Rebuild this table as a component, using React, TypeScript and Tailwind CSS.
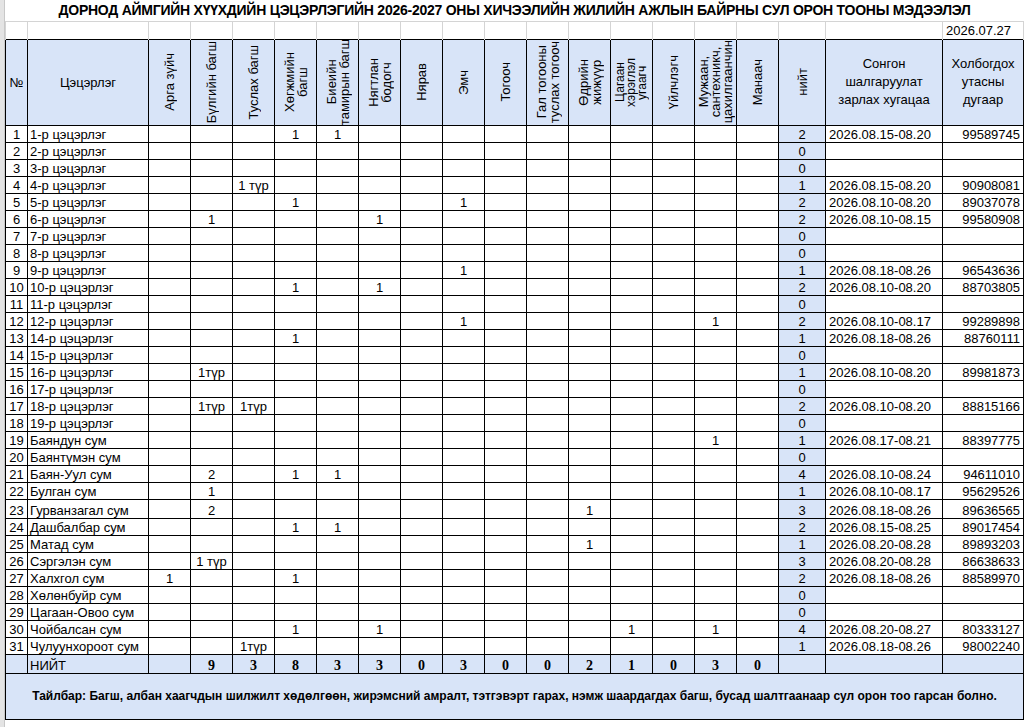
import React from 'react'

type Row = {
  name: string
  cells: Record<number, string>
  total: string
  date?: string
  phone?: string
  tall?: boolean
}

const positions: string[][] = [
  ['Арга зүйч'],
  ['Бүлгийн багш'],
  ['Туслах багш'],
  ['Хөгжмийн', 'багш'],
  ['Биеийн', 'тамирын багш'],
  ['Нягтлан', 'бодогч'],
  ['Нярав'],
  ['Эмч'],
  ['Тогооч'],
  ['Гал тогооны', 'туслах тогооч'],
  ['Өдрийн', 'жижүүр'],
  ['Цагаан', 'хэрэглэл', 'угаагч'],
  ['Үйлчлэгч'],
  ['Мужаан,', 'сантехникч,', 'цахилгаанчин'],
  ['Манаач'],
]

const rows: Row[] = [
  { name: '1-р цэцэрлэг', cells: { 3: '1', 4: '1' }, total: '2', date: '2026.08.15-08.20', phone: '99589745' },
  { name: '2-р цэцэрлэг', cells: {}, total: '0' },
  { name: '3-р цэцэрлэг', cells: {}, total: '0' },
  { name: '4-р цэцэрлэг', cells: { 2: '1 түр' }, total: '1', date: '2026.08.15-08.20', phone: '90908081' },
  { name: '5-р цэцэрлэг', cells: { 3: '1', 7: '1' }, total: '2', date: '2026.08.10-08.20', phone: '89037078' },
  { name: '6-р цэцэрлэг', cells: { 1: '1', 5: '1' }, total: '2', date: '2026.08.10-08.15', phone: '99580908' },
  { name: '7-р цэцэрлэг', cells: {}, total: '0' },
  { name: '8-р цэцэрлэг', cells: {}, total: '0' },
  { name: '9-р цэцэрлэг', cells: { 7: '1' }, total: '1', date: '2026.08.18-08.26', phone: '96543636' },
  { name: '10-р цэцэрлэг', cells: { 3: '1', 5: '1' }, total: '2', date: '2026.08.10-08.20', phone: '88703805' },
  { name: '11-р цэцэрлэг', cells: {}, total: '0' },
  { name: '12-р цэцэрлэг', cells: { 7: '1', 13: '1' }, total: '2', date: '2026.08.10-08.17', phone: '99289898' },
  { name: '14-р цэцэрлэг', cells: { 3: '1' }, total: '1', date: '2026.08.18-08.26', phone: '88760111' },
  { name: '15-р цэцэрлэг', cells: {}, total: '0' },
  { name: '16-р цэцэрлэг', cells: { 1: '1түр' }, total: '1', date: '2026.08.10-08.20', phone: '89981873' },
  { name: '17-р цэцэрлэг', cells: {}, total: '0' },
  { name: '18-р цэцэрлэг', cells: { 1: '1түр', 2: '1түр' }, total: '2', date: '2026.08.10-08.20', phone: '88815166' },
  { name: '19-р цэцэрлэг', cells: {}, total: '0' },
  { name: 'Баяндун сум', cells: { 13: '1' }, total: '1', date: '2026.08.17-08.21', phone: '88397775' },
  { name: 'Баянтүмэн сум', cells: {}, total: '0' },
  { name: 'Баян-Уул сум', cells: { 1: '2', 3: '1', 4: '1' }, total: '4', date: '2026.08.10-08.24', phone: '94611010' },
  { name: 'Булган сум', cells: { 1: '1' }, total: '1', date: '2026.08.10-08.17', phone: '95629526' },
  { name: 'Гурванзагал сум', cells: { 1: '2', 10: '1' }, total: '3', date: '2026.08.18-08.26', phone: '89636565', tall: true },
  { name: 'Дашбалбар сум', cells: { 3: '1', 4: '1' }, total: '2', date: '2026.08.15-08.25', phone: '89017454' },
  { name: 'Матад сум', cells: { 10: '1' }, total: '1', date: '2026.08.20-08.28', phone: '89893203' },
  { name: 'Сэргэлэн сум', cells: { 1: '1 түр' }, total: '3', date: '2026.08.20-08.28', phone: '86638633' },
  { name: 'Халхгол сум', cells: { 0: '1', 3: '1' }, total: '2', date: '2026.08.18-08.26', phone: '88589970' },
  { name: 'Хөлөнбуйр сум', cells: {}, total: '0' },
  { name: 'Цагаан-Овоо сум', cells: {}, total: '0' },
  { name: 'Чойбалсан сум', cells: { 3: '1', 5: '1', 11: '1', 13: '1' }, total: '4', date: '2026.08.20-08.27', phone: '80333127' },
  { name: 'Чулуунхороот сум', cells: { 2: '1түр' }, total: '1', date: '2026.08.18-08.26', phone: '98002240' },
]

const totals = ['', '9', '3', '8', '3', '3', '0', '3', '0', '0', '2', '1', '0', '3', '0']

const td = 'border border-black p-0 align-bottom leading-[15px] whitespace-nowrap overflow-hidden'
const blue = 'bg-[#d8e4f8]'

function VerticalLabel({ lines, index }: { lines: string[]; index: number }) {
  const tight = index === 11 ? 'text-[12px] leading-[11px]' : index === 13 ? 'leading-[12px]' : 'leading-[13px]'
  return (
    <div className="flex h-[85px] items-center justify-center overflow-hidden">
      <span className={`[writing-mode:vertical-rl] rotate-180 text-center whitespace-nowrap ${tight}`}>
        {lines.map((l, i) => (
          <React.Fragment key={i}>
            {i > 0 && <br />}
            {l}
          </React.Fragment>
        ))}
      </span>
    </div>
  )
}

export default function App() {
  return (
    <div className="flex w-[1025px] h-[727px] overflow-hidden bg-white text-[13px] text-black font-['Liberation_Sans',Arial,sans-serif]">
      <div className="w-[5px] shrink-0 bg-[#e4e4e4] border-r border-[#c8c8c8]" />
      <div className="flex-1">
        <table className="table-fixed border-collapse w-[1018px]">
          <colgroup>
            <col className="w-[22px]" />
            <col className="w-[121px]" />
            {positions.map((_, i) => (
              <col key={i} className="w-[42px]" />
            ))}
            <col className="w-[47px]" />
            <col className="w-[117px]" />
            <col className="w-[81px]" />
          </colgroup>
          <tbody>
            <tr className="h-[21px]">
              <td colSpan={20} className="p-0 border-b border-[#d4d4d4] text-center font-bold text-[14px] tracking-[-0.25px] leading-[20px] whitespace-nowrap">
                ДОРНОД АЙМГИЙН ХҮҮХДИЙН ЦЭЦЭРЛЭГИЙН 2026-2027 ОНЫ ХИЧЭЭЛИЙН ЖИЛИЙН АЖЛЫН БАЙРНЫ СУЛ ОРОН ТООНЫ МЭДЭЭЛЭЛ
              </td>
            </tr>
            <tr className="h-[18px]">
              {Array.from({ length: 19 }).map((_, i) => (
                <td key={i} className="p-0 border-x border-t border-[#d4d4d4] border-b-black" />
              ))}
              <td className="p-0 pl-[3px] border-x border-t border-[#d4d4d4] border-b-black leading-[16px] align-bottom">2026.07.27</td>
            </tr>
            <tr className="h-[86px]">
              <td className={`${td} ${blue} text-center align-middle`}>№</td>
              <td className={`${td} ${blue} text-center align-middle`}>Цэцэрлэг</td>
              {positions.map((p, i) => (
                <td key={i} className={`${td} ${blue} align-middle`}>
                  <VerticalLabel lines={p} index={i} />
                </td>
              ))}
              <td className={`${td} ${blue} align-middle`}>
                <VerticalLabel lines={['нийт']} index={-1} />
              </td>
              <td className={`${td} ${blue} text-center align-middle leading-[18px] whitespace-normal`}>
                Сонгон
                <br />
                шалгаруулат
                <br />
                зарлах хугацаа
              </td>
              <td className={`${td} ${blue} text-center align-middle leading-[18px] whitespace-normal`}>
                Холбогдох
                <br />
                утасны
                <br />
                дугаар
              </td>
            </tr>
            {rows.map((r, ri) => (
              <tr key={ri} className={r.tall ? 'h-[19px]' : 'h-[17px]'}>
                <td className={`${td} text-center`}>{ri + 1}</td>
                <td className={`${td} pl-[2px]`}>{r.name}</td>
                {positions.map((_, ci) => (
                  <td key={ci} className={`${td} text-center`}>
                    {r.cells[ci] ?? ''}
                  </td>
                ))}
                <td className={`${td} ${blue} text-center`}>{r.total}</td>
                <td className={`${td} pl-[3px]`}>{r.date ?? ''}</td>
                <td className={`${td} text-right pr-[3px]`}>{r.phone ?? ''}</td>
              </tr>
            ))}
            <tr className="h-[19px]">
              <td className={`${td} ${blue}`} />
              <td className={`${td} ${blue} pl-[2px]`}>НИЙТ</td>
              {totals.map((t, i) => (
                <td key={i} className={`${td} ${blue} text-center font-bold font-['Liberation_Serif','Times_New_Roman',serif] text-[14px]`}>
                  {t}
                </td>
              ))}
              <td className={`${td} ${blue}`} />
              <td className={`${td} ${blue}`} />
              <td className={`${td} ${blue}`} />
            </tr>
            <tr className="h-[46px]">
              <td colSpan={20} className={`border border-black ${blue} p-0 text-center align-middle font-bold text-[12px] whitespace-nowrap`}>
                Тайлбар: Багш, албан хаагчдын шилжилт хөдөлгөөн, жирэмсний амралт, тэтгэвэрт гарах, нэмж шаардагдах багш, бусад шалтгаанаар сул орон тоо гарсан болно.
              </td>
            </tr>
          </tbody>
        </table>
      </div>
    </div>
  )
}
